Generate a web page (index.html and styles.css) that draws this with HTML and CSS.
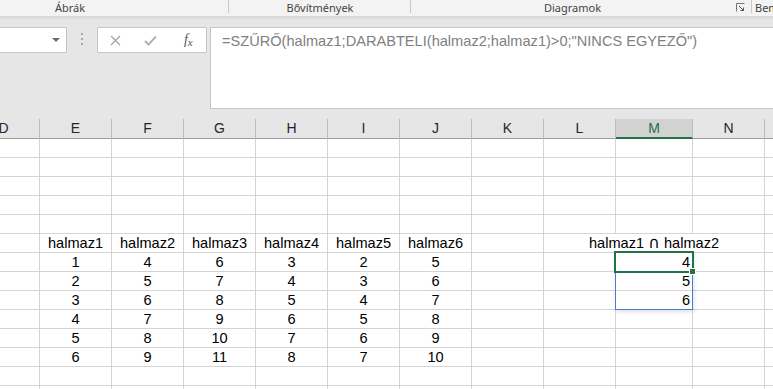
FILE: index.html
```html
<!DOCTYPE html>
<html lang="hu">
<head>
  <meta charset="UTF-8">
  <title>Halmazok metszete</title>
  <link rel="stylesheet" href="styles.css">
</head>
<body>
  <div class="ribbon">
    <div class="group group-abrak">Ábrák</div>
    <div class="group group-bov">Bővítmények</div>
    <div class="group group-diag">Diagramok
      <svg class="launcher" viewBox="0 0 9 9" width="9" height="9">
        <path d="M0.5 8.5V0.5H8.5" fill="none" stroke="#777" stroke-width="1"/>
        <path d="M3 3L7.5 7.5M4.5 7.5H7.5V4.5" fill="none" stroke="#555" stroke-width="1"/>
      </svg>
    </div>
    <div class="group group-bem">Bemutatók</div>
  </div>
  <div class="ribbon-shadow"></div>

  <div class="formula-bar">
    <div class="name-box"><span class="name-arrow"></span></div>
    <div class="grip"><span></span><span></span><span></span></div>
    <div class="fn-box">
      <span class="fn-btn">
        <svg viewBox="0 0 11 11" width="11" height="11"><path d="M1 1L10 10M10 1L1 10" stroke="#a3a3a3" stroke-width="1.3"/></svg>
      </span>
      <span class="fn-btn">
        <svg viewBox="0 0 13 11" width="13" height="11"><path d="M1 6L4.5 9.5L12 1.5" fill="none" stroke="#b3b3b3" stroke-width="2"/></svg>
      </span>
      <span class="fn-btn fx"><i>f</i><i class="x">x</i></span>
    </div>
    <div class="formula-input">=SZŰRŐ(halmaz1;DARABTELI(halmaz2;halmaz1)&gt;0;"NINCS EGYEZŐ")</div>
  </div>

  <div class="sheet-wrap">
    <div class="sheet" id="sheet"></div>
    <div class="spill"></div>
    <div class="cursor"></div>
    <div class="handle"></div>
  </div>

  <script>
    const cols = ['D', 'E', 'F', 'G', 'H', 'I', 'J', 'K', 'L', 'M', 'N', 'O'];
    const sets = [
      [1, 2, 3, 4, 5, 6],
      [4, 5, 6, 7, 8, 9],
      [6, 7, 8, 9, 10, 11],
      [3, 4, 5, 6, 7, 8],
      [2, 3, 4, 5, 6, 7],
      [5, 6, 7, 8, 9, 10]
    ];
    const metszet = [4, 5, 6];
    const sheet = document.getElementById('sheet');

    function cell(text, cls) {
      const el = document.createElement('div');
      el.className = cls;
      el.textContent = text;
      sheet.appendChild(el);
      return el;
    }

    cols.forEach(c => cell(c, c === 'M' ? 'col-head active' : 'col-head'));

    for (let r = 1; r <= 14; r++) {
      for (let c = 0; c < cols.length; c++) {
        if (r === 6 && c === 8) {
          const el = cell('', 'cell span3');
          el.innerHTML = 'halmaz1 <span class="cap">∩</span> halmaz2';
          c += 2;
          continue;
        }
        let text = '';
        let cls = 'cell';
        if (r === 6 && c >= 1 && c <= 6) text = 'halmaz' + c;
        if (r >= 7 && r <= 12 && c >= 1 && c <= 6) text = sets[c - 1][r - 7];
        if (c === 9 && r >= 7 && r <= 9) {
          text = metszet[r - 7];
          cls += ' right';
        }
        cell(text, cls);
      }
    }
  </script>
</body>
</html>
```

FILE: styles.css
```css
* {
  box-sizing: border-box;
}
body {
  margin: 0;
  width: 773px;
  height: 389px;
  overflow: hidden;
  background: #e6e6e6;
  font-family: "Liberation Sans", Arial, sans-serif;
}

/* ribbon group labels */
.ribbon {
  display: flex;
  height: 16px;
  background: #f3f3f3;
  font-family: "Noto Sans", "Open Sans", sans-serif;
  font-size: 11px;
  color: #444;
}
.group {
  position: relative;
  height: 16px;
  line-height: 16px;
  white-space: nowrap;
}
.group::after {
  content: "";
  position: absolute;
  right: 0;
  top: 0;
  width: 1px;
  height: 13px;
  background: #c8c8c8;
}
.group-abrak {
  width: 229px;
  padding-left: 55px;
}
.group-bov {
  width: 182px;
  text-align: center;
}
.group-diag {
  width: 341px;
  padding-right: 18px;
  text-align: center;
}
.group-bem {
  flex: 1;
  padding-left: 3px;
  overflow: hidden;
}
.group-bem::after {
  display: none;
}
.launcher {
  position: absolute;
  right: 7px;
  top: 3px;
}
.ribbon-shadow {
  height: 4px;
  background: linear-gradient(#d6d6d6, #e6e6e6);
}

/* formula bar */
.formula-bar {
  display: flex;
  align-items: flex-start;
  height: 99px;
  padding-top: 7px;
}
.name-box {
  width: 68px;
  height: 26px;
  margin-left: -1px;
  background: #fff;
  border: 1px solid #c6c6c6;
  display: flex;
  align-items: center;
  justify-content: flex-end;
  padding-right: 6px;
}
.name-arrow {
  width: 0;
  height: 0;
  border-left: 4px solid transparent;
  border-right: 4px solid transparent;
  border-top: 4px solid #6d6d6d;
}
.grip {
  display: flex;
  flex-direction: column;
  gap: 3px;
  width: 3px;
  margin-left: 14px;
  padding-top: 6px;
}
.grip span {
  width: 2px;
  height: 2px;
  background: #a8a8a8;
}
.fn-box {
  display: flex;
  align-items: center;
  width: 110px;
  height: 26px;
  margin-left: 13px;
  background: #fff;
  border: 1px solid #c6c6c6;
}
.fn-btn {
  flex: 1;
  display: flex;
  justify-content: center;
  align-items: center;
}
.fx {
  font-family: "Liberation Serif", serif;
  font-size: 14px;
  color: #555;
  padding-left: 2px;
}
.fx .x {
  font-size: 11px;
  position: relative;
  top: 2px;
}
.formula-input {
  flex: 1;
  height: 82px;
  margin-left: 3px;
  margin-right: -2px;
  padding: 4px 0 0 11px;
  background: #fff;
  border: 1px solid #c6c6c6;
  color: #808080;
  font-size: 14.6px;
  line-height: 18px;
  white-space: nowrap;
}

/* worksheet */
.sheet-wrap {
  position: relative;
}
.sheet {
  display: grid;
  grid-template-columns: repeat(9, 72px) 77px 72px 72px;
  grid-template-rows: 20px;
  grid-auto-rows: 19px;
  margin-left: -32px;
  width: 869px;
  background: #fff;
  font-size: 14.6px;
}
.col-head {
  background: #e6e6e6;
  border-right: 1px solid #bcbcbc;
  border-bottom: 1px solid #9e9e9e;
  text-align: center;
  line-height: 19px;
  font-size: 14px;
  color: #262626;
}
.col-head.active {
  background: #d2d2d2;
  color: #217346;
  border-bottom: 2px solid #217346;
}
.cell {
  border-right: 1px solid #d4d4d4;
  border-bottom: 1px solid #d4d4d4;
  text-align: center;
  line-height: 18px;
  color: #000;
  white-space: nowrap;
}
.cell.right {
  text-align: right;
  padding-right: 2px;
}
.span3 {
  grid-column: span 3;
}
.cap {
  font-family: "DejaVu Sans", sans-serif;
  font-size: 16px;
  line-height: 0;
}

/* selection over the spill range */
.spill {
  position: absolute;
  left: 615px;
  top: 133px;
  width: 78px;
  height: 58px;
  border: 1px solid #4a7bd0;
  box-shadow: 1px 2px 4px rgba(0,0,0,0.12);
}
.cursor {
  position: absolute;
  left: 614px;
  top: 132px;
  width: 80px;
  height: 22px;
  border: 2px solid #217346;
}
.handle {
  position: absolute;
  left: 689px;
  top: 149px;
  width: 7px;
  height: 7px;
  background: #217346;
  border: 1px solid #fff;
}
```
